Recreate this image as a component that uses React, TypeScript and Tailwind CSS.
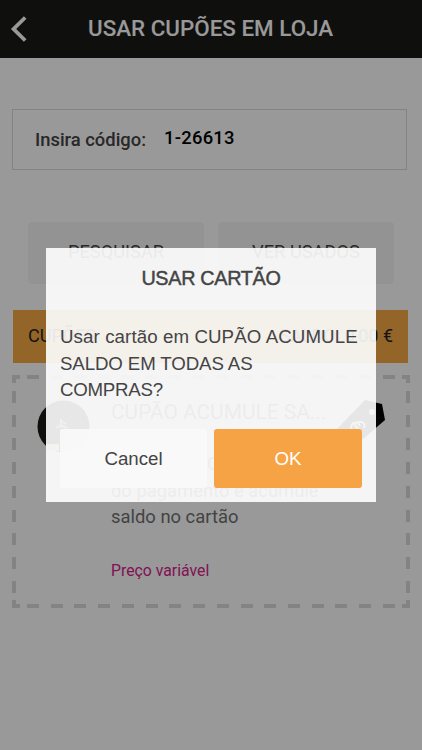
import clsx from "clsx";
import type { ReactNode } from "react";

function BackIcon() {
  return (
    <svg viewBox="0 0 18 28" fill="none" className="h-7 w-[18px]" aria-hidden>
      <path d="M15.2 2.500 3.600 14l11.600 11.500" stroke="#fff" strokeWidth="3.8" />
    </svg>
  );
}

function TagIcon() {
  return (
    <svg viewBox="0 0 54 46" className="h-[46px] w-[54px]" aria-hidden>
      <path d="M33 0 50 4l3 16L24 45 5 36V29Z" fill="#000" />
      <circle cx="40" cy="12" r="3" fill="#fff" />
      <path
        d="M19 29c0-7 6-9 9-3M22 24l5 6M25 23c4-3 9 0 7 5"
        fill="none"
        stroke="#fff"
        strokeWidth="2"
      />
    </svg>
  );
}

function CouponLogo() {
  return (
    <svg viewBox="0 0 53 53" className="h-[53px] w-[53px]" aria-hidden>
      <circle cx="26.500" cy="26.500" r="26" fill="#1a1a18" />
      <path d="M9 44h13v7H9Z" fill="#f7d9a8" />
      <path
        d="M24 19v9M19 28l5-3 6 3M24 21l5 3"
        fill="none"
        stroke="#c99c68"
        strokeWidth="2"
      />
    </svg>
  );
}

function Corner({ className }: { className: string }) {
  return (
    <span className={clsx("absolute h-2 w-2 border-[#dadada]", className)} />
  );
}

function SearchButton({ children }: { children: ReactNode }) {
  return (
    <button className="h-[62px] flex-1 rounded-sm bg-[#f6f6f6] pb-[3px] text-[18.3px] text-[#444]">
      {children}
    </button>
  );
}

function Coupon() {
  return (
    <section className="relative mt-3 ml-3 h-[233px] w-[398px]">
      <span className="absolute top-0 left-[15px] h-1 w-[380px] bg-[repeating-linear-gradient(90deg,#dadada_0_12px,transparent_12px_23.73px)]" />
      <span className="absolute bottom-0 left-[15px] h-1 w-[380px] bg-[repeating-linear-gradient(90deg,#dadada_0_12px,transparent_12px_23.73px)]" />
      <span className="absolute top-4 left-0 h-[212px] w-1 bg-[repeating-linear-gradient(180deg,#dadada_0_12px,transparent_12px_23.73px)]" />
      <span className="absolute top-4 right-0 h-[212px] w-1 bg-[repeating-linear-gradient(180deg,#dadada_0_12px,transparent_12px_23.73px)]" />
      <Corner className="top-0 left-0 border-t-4 border-l-4" />
      <Corner className="top-0 right-0 border-t-4 border-r-4" />
      <Corner className="bottom-0 left-0 border-b-4 border-l-4" />
      <Corner className="right-0 bottom-0 border-r-4 border-b-4" />

      <div className="flex pt-[25px] pl-[25px]">
        <CouponLogo />
        <div className="ml-[21px] w-[222px] shrink-0 text-[#707070]">
          <h2 className="text-[20.9px] leading-6 whitespace-nowrap">
            CUPÃO ACUMULE SA...
          </h2>
          <p className="mt-[27px] text-[18.4px] leading-[26.5px] whitespace-nowrap">
            <span className="block pl-24">Com 5€</span>
            do pagamento e acumule
            <br />
            saldo no cartão
          </p>
          <p className="mt-[28px] text-[15.8px] leading-6 text-[#d6228c]">
            Preço variável
          </p>
        </div>
        <div className="-ml-px">
          <TagIcon />
        </div>
      </div>
    </section>
  );
}

function ConfirmDialog() {
  return (
    <div className="absolute inset-0 bg-black/40 pt-[248px] pl-[46px] font-['Liberation_Sans',sans-serif]">
      <div
        role="dialog"
        className="h-[254px] w-[330px] bg-white/90 px-[14px] text-[#444]"
      >
        <h2 className="pt-[18px] text-center text-[19.8px] leading-6 tracking-[-0.3px] [-webkit-text-stroke:0.45px_#444]">
          USAR CARTÃO
        </h2>
        <p className="mt-[34px] text-[18.7px] leading-[26.5px] whitespace-nowrap">
          <span className="tracking-[0.1px]">Usar cartão em CUPÃO ACUMULE</span>
          <br />
          <span className="tracking-[-0.12px]">SALDO EM TODAS AS</span>
          <br />
          <span className="tracking-[-0.25px]">COMPRAS?</span>
        </p>
        <div className="mt-[25.5px] flex gap-[7px] text-[18.7px]">
          <button className="h-[59px] w-[147px] rounded-[3px] bg-[#f9f9f9]/90 pt-0.5">
            Cancel
          </button>
          <button className="h-[59px] w-[148px] rounded-[3px] bg-[#f6a345] pt-0.5 text-white">
            OK
          </button>
        </div>
      </div>
    </div>
  );
}

export default function App() {
  return (
    <main className="relative h-[750px] w-[422px] overflow-hidden bg-white font-[Roboto,sans-serif]">
      <header className="flex h-[58px] items-center bg-[#1a1a18] text-white">
        <div className="ml-[10px]">
          <BackIcon />
        </div>
        <h1 className="ml-[60px] text-[22.4px] font-medium">
          USAR CUPÕES EM LOJA
        </h1>
      </header>

      <div className="mt-[51px] ml-3 flex h-[61px] w-[395px] items-center border border-[#dadada] pl-[22px] text-[18.4px] font-medium">
        <span className="text-[#444]">Insira código:</span>
        <span className="ml-[18px] pb-[4px] tracking-[0.25px] text-black">
          1-26613
        </span>
      </div>

      <div className="mt-[52px] ml-7 flex w-[366px] gap-[14px]">
        <SearchButton>PESQUISAR</SearchButton>
        <SearchButton>VER USADOS</SearchButton>
      </div>

      <div className="mt-[26px] ml-[13px] flex h-[53px] w-[395px] items-center justify-between bg-[#f7a845] px-[15px] pb-0.5 text-[18px] text-[#222]">
        <span>CUPÕES</span>
        <span>SALDO: 0,00 €</span>
      </div>

      <Coupon />
      <ConfirmDialog />
    </main>
  );
}
